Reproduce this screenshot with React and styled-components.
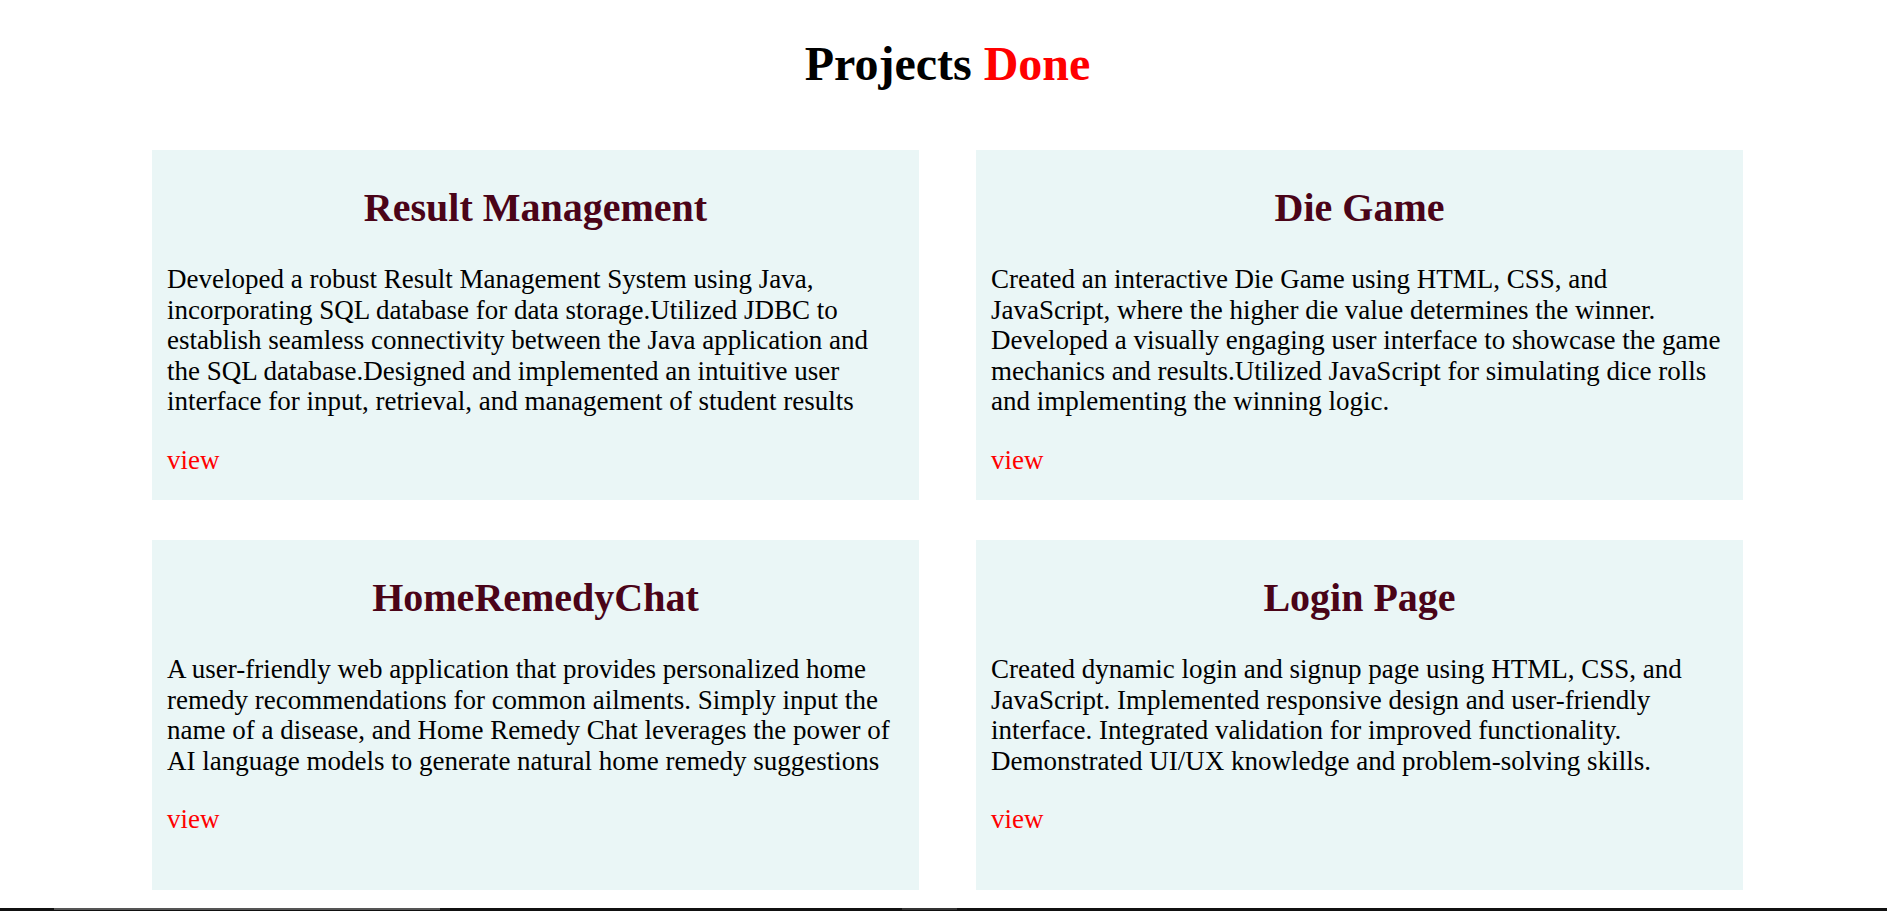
import React from 'react';
import styled, { createGlobalStyle } from 'styled-components';

const GlobalStyle = createGlobalStyle`
  body {
    margin: 0;
    background: #fff;
    font-family: "Liberation Serif", "Times New Roman", serif;
  }
`;

const ProjectsSection = styled.section`
  padding: 36px 144px 18px 152px;
`;

const Heading = styled.h1`
  margin: 0 0 59px;
  text-align: center;
  font-size: 48px;
  font-weight: bold;
  color: #000;

  span {
    color: #ff0000;
  }
`;

const ProjectGrid = styled.div`
  display: grid;
  grid-template-columns: 1fr 1fr;
  grid-auto-rows: 1fr;
  column-gap: 57px;
  row-gap: 40px;
`;

const ProjectCard = styled.div`
  background-color: #eaf6f6;
  padding: 34px 15px 24px;
`;

const ProjectTitle = styled.h2`
  margin: 0 0 33px;
  text-align: center;
  font-size: 40px;
  font-weight: bold;
  color: #4a0418;
`;

const ProjectText = styled.p`
  margin: 0 0 28px;
  font-size: 27px;
  line-height: 30.6px;
  color: #000;
`;

const ViewLink = styled.a`
  font-size: 27px;
  color: #ff0000;
  text-decoration: none;
`;

const DarkSection = styled.section`
  background-color: #111;
  height: 200px;
`;

const Strip = styled.div`
  display: flex;
  height: 2px;
`;

const StripPart = styled.div`
  width: ${(p) => p.w}px;
  flex: ${(p) => (p.w ? 'none' : 1)};
  background: ${(p) => p.bg || '#111'};
`;

const projects = [
  {
    name: 'Result Management',
    text: 'Developed a robust Result Management System using Java, incorporating SQL database for data storage.Utilized JDBC to establish seamless connectivity between the Java application and the SQL database.Designed and implemented an intuitive user interface for input, retrieval, and management of student results',
  },
  {
    name: 'Die Game',
    text: 'Created an interactive Die Game using HTML, CSS, and JavaScript, where the higher die value determines the winner. Developed a visually engaging user interface to showcase the game mechanics and results.Utilized JavaScript for simulating dice rolls and implementing the winning logic.',
  },
  {
    name: 'HomeRemedyChat',
    text: 'A user-friendly web application that provides personalized home remedy recommendations for common ailments. Simply input the name of a disease, and Home Remedy Chat leverages the power of AI language models to generate natural home remedy suggestions',
  },
  {
    name: 'Login Page',
    text: 'Created dynamic login and signup page using HTML, CSS, and JavaScript. Implemented responsive design and user-friendly interface. Integrated validation for improved functionality. Demonstrated UI/UX knowledge and problem-solving skills.',
  },
];

const App = () => {
  return (
    <>
      <GlobalStyle />
      <ProjectsSection>
        <Heading>
          Projects <span>Done</span>
        </Heading>
        <ProjectGrid>
          {projects.map((project) => (
            <ProjectCard key={project.name}>
              <ProjectTitle>{project.name}</ProjectTitle>
              <ProjectText>{project.text}</ProjectText>
              <ViewLink href="#">view</ViewLink>
            </ProjectCard>
          ))}
        </ProjectGrid>
      </ProjectsSection>
      <DarkSection>
        <Strip>
          <StripPart w={54} />
          <StripPart w={386} bg="#555" />
          <StripPart w={462} />
          <StripPart w={55} bg="#333" />
          <StripPart />
        </Strip>
      </DarkSection>
    </>
  );
};

export default App;
